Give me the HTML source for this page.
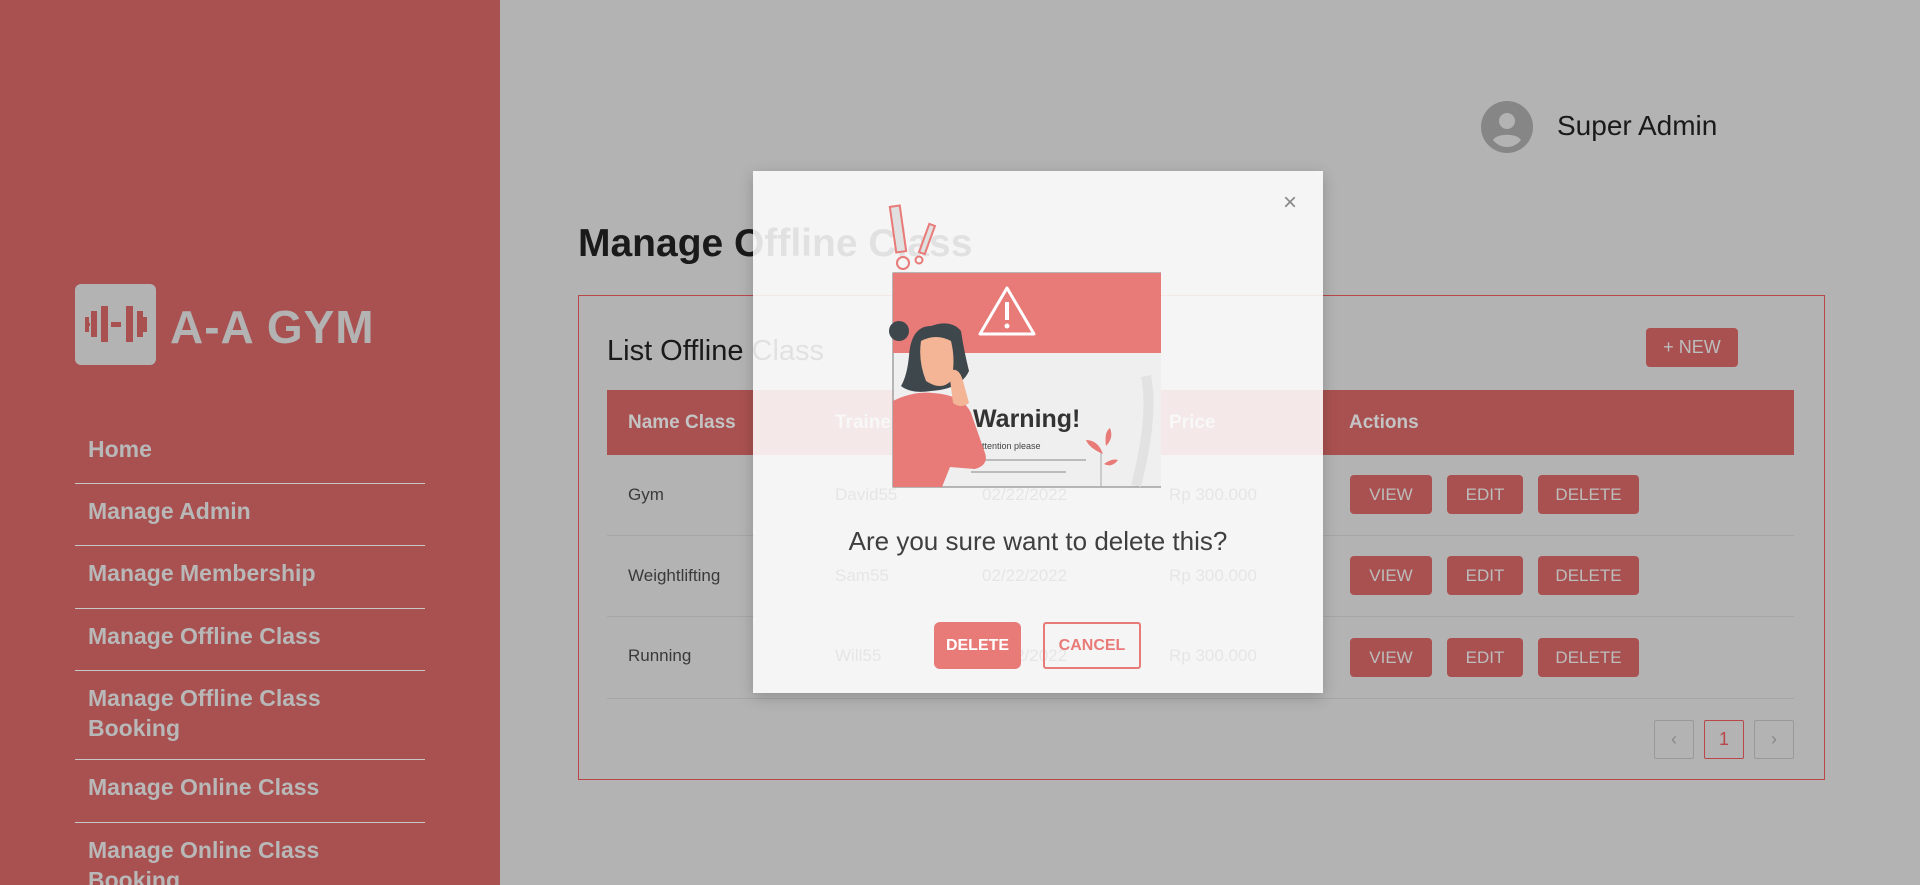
<!DOCTYPE html>
<html><head><meta charset="utf-8"><style>
*{margin:0;padding:0;box-sizing:border-box}
html{width:1920px;height:885px;overflow:hidden}
body{width:1920px;height:885px;overflow:hidden;background:#b3b3b3;font-family:"Liberation Sans",Arial,sans-serif;position:relative}
.sb{position:absolute;left:0;top:0;width:500px;height:885px;background:#a95150}
.logo{position:absolute;left:75px;top:284px;width:81px;height:81px;background:#b3b3b3;border-radius:6px}
.brand{position:absolute;left:170px;top:300px;font-size:46px;font-weight:bold;color:#b3b3b3;letter-spacing:1px;white-space:nowrap}
.mi{position:absolute;left:13px;font-size:23px;font-weight:bold;color:#b8b8b8;line-height:30px}
.sep{position:absolute;left:75px;width:350px;height:1px;background:#c7c7c7}
.abs{position:absolute}
.btn{position:absolute;background:#a95150;color:#bdbdbd;border-radius:4px;font-size:17px;text-align:center;line-height:39px;height:39px}
.th{position:absolute;top:412px;font-size:19px;font-weight:bold;color:#c4c4c4}
.td{position:absolute;font-size:17px;color:#3a3a3a}
.rowsep{position:absolute;left:607px;width:1187px;height:1px;background:#a6a6a6}
.pg{position:absolute;top:720px;width:40px;height:39px;border:1px solid #999;border-radius:2px;text-align:center;line-height:37px;color:#888;font-size:18px}
.modal{position:absolute;left:753px;top:171px;width:570px;height:522px;background:rgba(255,255,255,0.87);box-shadow:0 4px 14px rgba(0,0,0,0.2)}
</style></head><body>
<div class="sb"></div>
<div class="logo">
<svg width="81" height="81" viewBox="0 0 81 81"><g fill="#a95150"><rect x="10" y="33" width="4" height="15"/><rect x="12" y="39" width="3" height="3"/><rect x="16" y="27" width="6" height="26"/><rect x="26" y="22" width="7" height="36"/><rect x="36" y="38" width="10" height="5"/><rect x="51" y="22" width="7" height="36"/><rect x="62" y="27" width="6" height="26"/><rect x="68" y="33" width="4" height="15"/></g></svg>
</div>
<div class="brand">A-A GYM</div>
<div class="mi" style="left:88px;top:434px">Home</div>
<div class="sep" style="top:483px"></div>
<div class="mi" style="left:88px;top:496px">Manage Admin</div>
<div class="sep" style="top:545px"></div>
<div class="mi" style="left:88px;top:558px">Manage Membership</div>
<div class="sep" style="top:608px"></div>
<div class="mi" style="left:88px;top:621px">Manage Offline Class</div>
<div class="sep" style="top:670px"></div>
<div class="mi" style="left:88px;top:683px">Manage Offline Class<br>Booking</div>
<div class="sep" style="top:759px"></div>
<div class="mi" style="left:88px;top:772px">Manage Online Class</div>
<div class="sep" style="top:822px"></div>
<div class="mi" style="left:88px;top:835px;height:50px;overflow:hidden">Manage Online Class<br>Booking</div>

<svg class="abs" style="left:1481px;top:101px" width="52" height="52" viewBox="0 0 52 52"><circle cx="26" cy="26" r="26" fill="#868686"/><circle cx="26" cy="20" r="8" fill="#b3b3b3"/><path d="M12 39c4-7 24-7 28 0c-4 5-9 7-14 7s-10-2-14-7z" fill="#b3b3b3"/></svg>
<div class="abs" style="left:1557px;top:110px;font-size:28px;color:#1a1a1a">Super Admin</div>

<div class="abs" style="left:578px;top:222px;font-size:39px;font-weight:bold;color:#1a1a1a">Manage Offline Class</div>
<div class="abs" style="left:578px;top:295px;width:1247px;height:485px;border:1px solid #b9474a"></div>
<div class="abs" style="left:607px;top:335px;font-size:29px;color:#1a1a1a">List Offline Class</div>
<div class="btn" style="left:1646px;top:328px;width:92px;font-size:18px">+ NEW</div>
<div class="abs" style="left:607px;top:390px;width:1187px;height:65px;background:#a95150"></div>
<div class="th" style="left:628px">Name Class</div>
<div class="th" style="left:835px">Trainer</div>
<div class="th" style="left:982px">Date</div>
<div class="th" style="left:1169px">Price</div>
<div class="th" style="left:1349px">Actions</div>

<div class="td" style="left:628px;top:485px">Gym</div>
<div class="td" style="left:835px;top:485px">David55</div>
<div class="td" style="left:982px;top:485px">02/22/2022</div>
<div class="td" style="left:1169px;top:485px">Rp 300.000</div>
<div class="rowsep" style="top:535px"></div>
<div class="td" style="left:628px;top:566px">Weightlifting</div>
<div class="td" style="left:835px;top:566px">Sam55</div>
<div class="td" style="left:982px;top:566px">02/22/2022</div>
<div class="td" style="left:1169px;top:566px">Rp 300.000</div>
<div class="rowsep" style="top:616px"></div>
<div class="td" style="left:628px;top:646px">Running</div>
<div class="td" style="left:835px;top:646px">Will55</div>
<div class="td" style="left:982px;top:646px">02/22/2022</div>
<div class="td" style="left:1169px;top:646px">Rp 300.000</div>
<div class="rowsep" style="top:698px"></div>

<div class="btn" style="left:1350px;top:475px;width:82px">VIEW</div>
<div class="btn" style="left:1447px;top:475px;width:76px">EDIT</div>
<div class="btn" style="left:1538px;top:475px;width:101px">DELETE</div>
<div class="btn" style="left:1350px;top:556px;width:82px">VIEW</div>
<div class="btn" style="left:1447px;top:556px;width:76px">EDIT</div>
<div class="btn" style="left:1538px;top:556px;width:101px">DELETE</div>
<div class="btn" style="left:1350px;top:638px;width:82px">VIEW</div>
<div class="btn" style="left:1447px;top:638px;width:76px">EDIT</div>
<div class="btn" style="left:1538px;top:638px;width:101px">DELETE</div>

<div class="pg" style="left:1654px">&lsaquo;</div>
<div class="pg" style="left:1704px;border-color:#b9474a;color:#b9474a">1</div>
<div class="pg" style="left:1754px">&rsaquo;</div>

<div class="modal">
<div class="abs" style="left:530px;top:18px;font-size:24px;color:#888">×</div>
<svg class="abs" style="left:118px;top:25px" width="290" height="300" viewBox="0 0 290 300">
<rect x="22" y="10" width="10" height="46" fill="#e0e0e0" stroke="#e87a78" stroke-width="2" transform="rotate(-8 27 33)"/>
<circle cx="32" cy="67" r="6" fill="none" stroke="#e87a78" stroke-width="2"/>
<rect x="53" y="28" width="6" height="30" fill="#e0e0e0" stroke="#e87a78" stroke-width="2" transform="rotate(20 56 43)"/>
<circle cx="48" cy="64" r="3.5" fill="none" stroke="#e87a78" stroke-width="2"/>
<rect x="22" y="77" width="274" height="214" fill="#efefef" stroke="#777" stroke-width="1"/>
<rect x="22" y="77" width="274" height="80" fill="#e87a78"/>
<path d="M136 92 L163 138 H109 Z" fill="none" stroke="#fff" stroke-width="3" stroke-linejoin="round"/>
<rect x="134" y="106" width="4" height="18" fill="#fff"/><circle cx="136" cy="130" r="2.5" fill="#fff"/>
<text x="102" y="231" font-family="Liberation Sans,sans-serif" font-weight="bold" font-size="25" fill="#333">Warning!</text>
<text x="105" y="253" font-family="Liberation Sans,sans-serif" font-size="9" fill="#444">Attention please</text>
<line x1="100" y1="264" x2="215" y2="264" stroke="#aaa" stroke-width="1.5"/>
<line x1="100" y1="276" x2="195" y2="276" stroke="#aaa" stroke-width="1.5"/>
<path d="M275 180 q8 40 -10 110" stroke="#ddd" stroke-width="10" fill="none" opacity="0.7"/>
<path d="M230 290 V255" stroke="#aaa" stroke-width="1"/>
<path d="M232 258 q-14 -6 -17 -14 q12 0 17 14z M235 250 q-2 -14 4 -18 q4 10 -4 18z M233 268 q8 -6 14 -4 q-6 8 -14 4z" fill="#e87a78"/>
<path d="M22 291 V205 q20 -10 40 -8 q30 2 38 20 l14 40 q4 12 -10 16 l-25 -2 l-8 20 Z" fill="#e87a78"/>
<path d="M60 130 q-20 0 -22 30 q-2 20 -8 30 q10 8 30 5 q30 -2 38 -20 q-5 -20 -8 -40 q-10 -12 -30 -5z" fill="#3e474c"/>
<circle cx="28" cy="135" r="10" fill="#3e474c"/>
<path d="M50 145 q15 -8 30 0 q5 20 0 40 q-10 10 -25 0 q-8 -20 -5 -40z" fill="#f3b596"/>
<path d="M78 175 q10 -5 14 10 l6 22 q-8 6 -16 0z" fill="#f3b596"/>
</svg>
<div class="abs" style="left:0;width:570px;top:355px;text-align:center;font-size:26px;color:#3f3f3f">Are you sure want to delete this?</div>
<div class="abs" style="left:181px;top:451px;width:87px;height:47px;background:#e87a78;border-radius:6px;color:#fff;font-weight:bold;font-size:16px;text-align:center;line-height:47px">DELETE</div>
<div class="abs" style="left:290px;top:451px;width:98px;height:47px;border:2px solid #e87a78;border-radius:3px;color:#e87a78;font-weight:bold;font-size:16px;text-align:center;line-height:43px">CANCEL</div>
</div>
</body></html>
